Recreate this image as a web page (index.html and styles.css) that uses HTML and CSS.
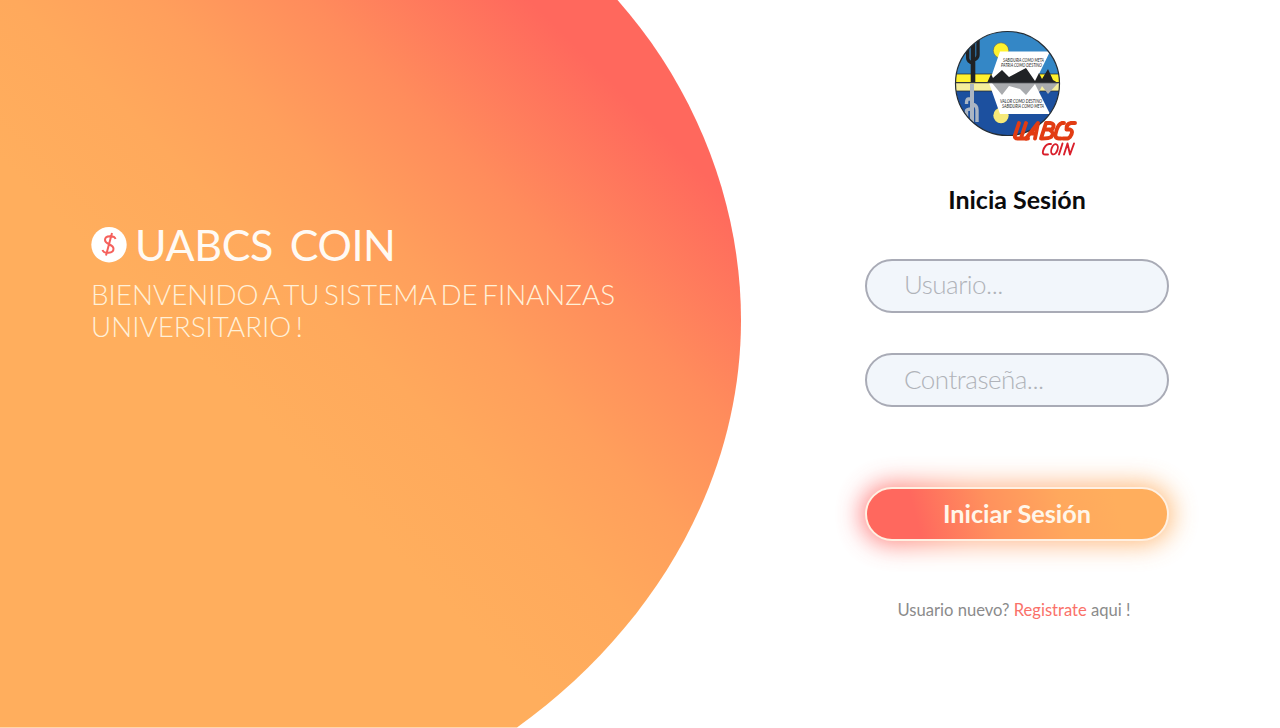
FILE: index.html
```html
<!DOCTYPE html>
<html lang="es">
<head>
<meta charset="utf-8">
<title>UABCS COIN</title>
<link rel="stylesheet" href="styles.css">
</head>
<body>
<main class="page">
  <svg class="backdrop" viewBox="0 0 1280 728" aria-hidden="true">
    <defs>
      <linearGradient id="sunset" gradientUnits="userSpaceOnUse" x1="627" y1="97" x2="282" y2="442">
        <stop offset="0" stop-color="#ff685d"/>
        <stop offset=".32" stop-color="#ff8c5c"/>
        <stop offset=".55" stop-color="#ff9f5c"/>
        <stop offset=".75" stop-color="#ffa95c"/>
        <stop offset="1" stop-color="#ffae5d"/>
      </linearGradient>
    </defs>
    <path fill="url(#sunset)" d="M0 0H617.500C697 90 741 205 741 320C741 480 655 628 517 727.500H0Z"/>
  </svg>
  <section class="welcome">
    <h1 class="brand">
      <svg class="coin" viewBox="0 0 36 36" aria-hidden="true">
        <circle cx="18" cy="17.700" r="17.700" fill="#fff"/>
        <path d="M24.500 12C23.500 8.500 14 8 14 13C14 17.500 22.500 17 22.500 21.800C22.500 27 13 27 11.500 23M21 6L15 28.500" fill="none" stroke="#f5605c" stroke-width="2"/>
      </svg>
      <span class="brand-name">UABCS&nbsp; COIN</span>
    </h1>
    <p class="greeting">BIENVENIDO A TU SISTEMA DE FINANZAS<br>UNIVERSITARIO !</p>
  </section>
  <form class="login">
    <svg class="logo" viewBox="0 0 150 145" role="img" aria-label="UABCS COIN">
      <defs><clipPath id="seal"><circle cx="67.500" cy="63.500" r="52"/></clipPath></defs>
      <g clip-path="url(#seal)">
        <path fill="#3487c6" d="M10 5H125V55H10Z"/>
        <path fill="#fff22e" d="M10 54H125V63H10Z"/>
        <path fill="#f5ed9c" d="M10 63H125V71H10Z"/>
        <path fill="#1c509f" d="M10 71H125V120H10Z"/>
        <path d="M10 54H125M10 71H125" stroke="#222" stroke-width=".7"/>
        <circle cx="61" cy="30.500" r="7.700" fill="#fff22e" stroke="#665" stroke-width=".6"/>
        <circle cx="61" cy="95.500" r="7.700" fill="#f6e979"/>
        <path fill="#fff" d="M60 31.500H110L99 54L103 62L99 72L110 94H60L49 63Z"/>
        <path fill="#202225" d="M47 63L51 54L53 58L62 50L69 57L86 48L95 61L99 53L102 59L108 49L113 60L118 63Z"/>
        <path fill="#a9abae" d="M52 63H118L108 74L102 66L99 72L95 64L86 75L80 69L69 66L62 75Z"/>
        <path fill="none" stroke="#202225" stroke-width="4.600" d="M33 62V14"/>
        <path fill="none" stroke="#202225" stroke-width="3.400" d="M27.700 25V38Q27.700 42 33 43M38 20V35Q38 39 33 40"/>
        <path fill="none" stroke="#aab5c3" stroke-width="4" d="M32 64V108"/>
        <path fill="none" stroke="#aab5c3" stroke-width="3.400" d="M26.500 103V91Q26.500 89 32 89M32 79H28Q26.500 79 26.500 84M37 102V90Q37 85 32 84"/>
        <path d="M10 62.700H125" stroke="#34373b" stroke-width="1.200"/>
      </g>
      <circle cx="67.500" cy="63.500" r="52" fill="none" stroke="#252d35" stroke-width="1.200"/>
      <g class="motto">
        <text x="63" y="41.700" textLength="41" lengthAdjust="spacingAndGlyphs">SABIDURIA COMO META</text>
        <text x="61" y="46.500" textLength="41" lengthAdjust="spacingAndGlyphs">PATRIA COMO DESTINO</text>
        <text x="60" y="82.500" textLength="42" lengthAdjust="spacingAndGlyphs">VALOR COMO DESTINO</text>
        <text x="62" y="87.500" textLength="42" lengthAdjust="spacingAndGlyphs">SABIDURIA COMO META</text>
      </g>
      <g fill="none" stroke-linecap="round" stroke-linejoin="round">
        <g stroke="#e23c13" stroke-width="3.900">
          <path d="M79 103L75 115Q74 118.500 78 118.500H88M86 103L81 118"/>
          <path d="M86 118.500L98 103L95 118.500M90 113.500H96"/>
          <path d="M101 118.500L106 103H110Q116 104 112 109.500H106M110 110Q115 113 111 117Q109 118.500 102 118.500"/>
          <path d="M124 103H122Q118 104 116 112Q114 118.500 119 118.500H121"/>
          <path d="M135 103H131Q126 104 126.500 109.500H130Q134 111 130 117L128 118.500H123"/>
        </g>
        <g stroke="#d91f2b" stroke-width="1.900">
          <path d="M111 124H109Q105 124.500 103 131Q102 135 106 134.500H108"/>
          <ellipse cx="114.500" cy="129.300" rx="3" ry="5.300" transform="rotate(20 114.500 129.300)"/>
          <path d="M122.500 123.500L119 134.500M124 134.500L127.500 123.500L130 134.500L134 123.500"/>
        </g>
      </g>
    </svg>
    <h2 class="title">Inicia Sesión</h2>
    <input class="field field-user" type="text" placeholder="Usuario..." aria-label="Usuario">
    <input class="field field-pass" type="password" placeholder="Contraseña..." aria-label="Contraseña">
    <button class="submit" type="button">Iniciar Sesión</button>
    <p class="signup">Usuario nuevo? <a class="link" href="#">Registrate</a> aqui !</p>
  </form>
</main>
</body>
</html>
```

FILE: styles.css
```css
* { box-sizing: border-box; }
body { margin: 0; font-family: Lato, sans-serif; background: #fff; }
.page {
  display: grid;
  grid-template-columns: 754px 526px;
  width: 1280px;
  height: 728px;
  overflow: hidden;
  position: relative;
  isolation: isolate;
}
.backdrop { position: absolute; inset: 0; width: 1280px; height: 728px; z-index: -1; }
.welcome { padding: 220px 0 0 91px; color: #fffaf4; }
.brand { display: flex; align-items: center; gap: 8px; margin: 0; height: 50px; font-size: 43px; font-weight: 400; }
.coin { width: 36px; height: 36px; flex: none; }
.brand-name { white-space: nowrap; line-height: 50px; letter-spacing: -.4px; word-spacing: -2.200px; }
.greeting { margin: 9px 0 0; font-size: 27.800px; line-height: 32px; font-weight: 300; word-spacing: -3px; color: #fff0d8; white-space: nowrap; }
.login { display: flex; flex-direction: column; align-items: center; padding-top: 20px; }
.logo { width: 150px; height: 145px; flex: none; margin-right: 4px; }
.motto { font: italic 400 4.800px Lato, sans-serif; fill: #222; }
.title { margin: 19px 0 0; font-size: 25px; line-height: 30px; font-weight: 700; color: #0b0b0d; }
.field, .submit { width: 304px; height: 54px; border-radius: 27px; flex: none; font-family: inherit; }
.field {
  border: 2px solid #a9abb6;
  background: #f2f6fb;
  padding: 0 37px;
  font-size: 26px;
  font-weight: 300;
  letter-spacing: -.500px;
  outline: none;
}
.field::placeholder { color: #b0b3b9; opacity: 1; }
.field-user { margin-top: 45px; padding-bottom: 5px; }
.field-pass { margin-top: 40px; padding-bottom: 2px; }
.submit {
  margin-top: 80px;
  padding: 0 0 2px;
  border: 2px solid #fff0e2;
  background: linear-gradient(75deg, #ff685e 18%, #ff925d 42%, #ffa85d 65%, #ffae5d 82%) border-box;
  position: relative;
  color: #fff6e9;
  font-size: 25.300px;
  font-weight: 700;
}
.submit::before {
  content: "";
  position: absolute;
  inset: -5px;
  z-index: -1;
  border-radius: 32px;
  background: linear-gradient(90deg, #ff585e, #ffa87d 35%, #ffae5d);
  filter: blur(13px);
  opacity: .85;
}
.signup { margin: 58px 0 0; padding-right: 6px; font-size: 16.600px; line-height: 22px; color: #8b8b8b; }
.link { color: #fa7169; text-decoration: none; }
```
